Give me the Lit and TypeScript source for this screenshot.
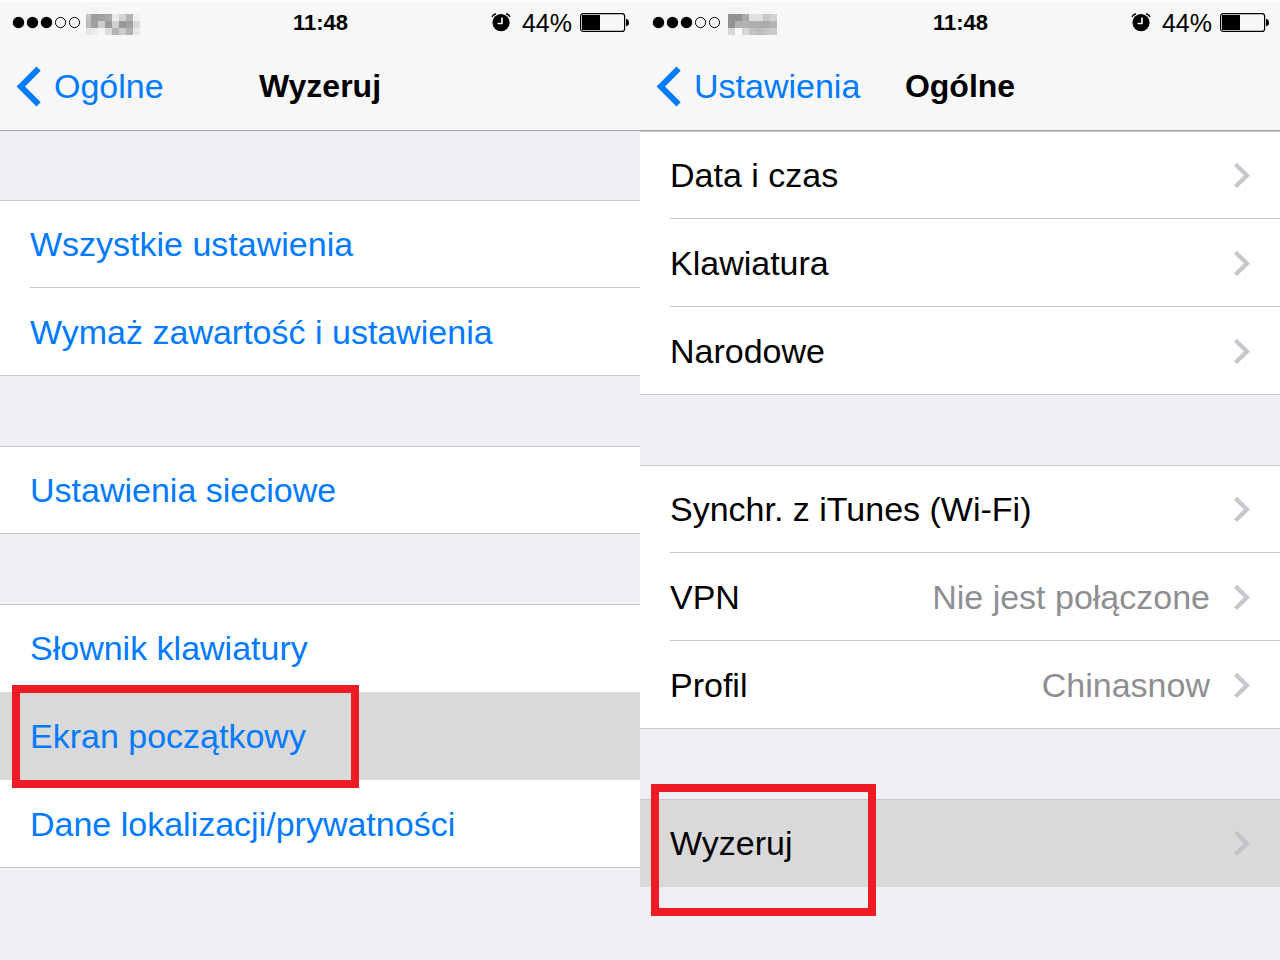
import { LitElement, html, svg, css, nothing } from "lit";
import { customElement, property } from "lit/decorators.js";
import { classMap } from "lit/directives/class-map.js";

interface Row {
  label: string;
  value?: string;
  active?: boolean;
  mark?: "tight" | "tall";
}

// Mosaic over the carrier name: start of the first column, start of the second, rows of shades.
interface Mosaic {
  first: number;
  second: number;
  shades: string[][];
}

const RESET_GROUPS: Row[][] = [
  [{ label: "Wszystkie ustawienia" }, { label: "Wymaż zawartość i ustawienia" }],
  [{ label: "Ustawienia sieciowe" }],
  [
    { label: "Słownik klawiatury" },
    { label: "Ekran początkowy", active: true, mark: "tight" },
    { label: "Dane lokalizacji/prywatności" },
  ],
];

const GENERAL_GROUPS: Row[][] = [
  [{ label: "Data i czas" }, { label: "Klawiatura" }, { label: "Narodowe" }],
  [
    { label: "Synchr. z iTunes (Wi-Fi)" },
    { label: "VPN", value: "Nie jest połączone" },
    { label: "Profil", value: "Chinasnow" },
  ],
  [{ label: "Wyzeruj", active: true, mark: "tall" }],
];

const CARRIER_A: Mosaic = {
  first: 0,
  second: 5,
  shades: [
    ["#f5f5f5", "#f2f2f2", "#f6f6f6", "#f4f4f4", "#f7f7f7", "#f7f7f7", "#f7f7f7", "#f7f7f7"],
    ["#c2c2c2", "#9e9e9e", "#a0a0a0", "#a9a9a9", "#ebebeb", "#d4d4d4", "#b4b4b4", "#f0f0f0"],
    ["#bcbcbc", "#a0a0a0", "#cecece", "#9a9a9a", "#d0d0d0", "#999999", "#a2a2a2", "#dadada"],
    ["#e4e4e4", "#ececec", "#f5f5f5", "#dddddd", "#b4b4b4", "#cccccc", "#b2b2b2", "#e8e8e8"],
  ],
};

const CARRIER_B: Mosaic = {
  first: 2,
  second: 9,
  shades: [
    ["#f2f2f2", "#f4f4f4", "#f4f4f4", "#f7f7f7", "#f7f7f7", "#f7f7f7", "#f7f7f7"],
    ["#929292", "#929292", "#aaaaaa", "#e0e0e0", "#e0e0e0", "#c8c8c8", "#d4d4d4"],
    ["#929292", "#b2b2b2", "#b2b2b2", "#b0b0b0", "#aeaeae", "#acacac", "#b4b4b4"],
    ["#d6d6d6", "#fafafa", "#d8d8d8", "#c4c4c4", "#bcbcbc", "#c4c4c4", "#cacaca"],
  ],
};

@customElement("status-bar")
export class StatusBar extends LitElement {
  @property({ attribute: false }) carrier: Mosaic = CARRIER_A;

  static styles = css`
    :host {
      display: grid;
      grid-template-columns: 1fr auto 1fr;
      align-items: center;
      height: 42px;
      padding: 0 11px 0 12px;
    }
    .signal, .power { display: flex; align-items: center; }
    .signal { gap: 5px; }
    .power { justify-content: flex-end; }
    .time { font-size: 22px; font-weight: 700; }
    .percent { font-size: 25px; margin: 0 8px 0 11px; }
    svg { display: block; }
  `;

  private renderMosaic({ first, second, shades }: Mosaic) {
    return shades.map((row, r) =>
      row.map((shade, c) => {
        const x = c === 0 ? first : second + (c - 1) * 7;
        const width = c === 0 ? second - first : 7;
        return svg`<rect x=${x} y=${r * 7} width=${width} height="7" fill=${shade} />`;
      })
    );
  }

  render() {
    return html`
      <div class="signal">
        <svg width="69" height="14" viewBox="0 0 69 14" aria-hidden="true">
          ${[0, 1, 2, 3, 4].map((i) =>
            i < 3
              ? svg`<circle cx=${6.5 + i * 14} cy="6.5" r="5.7" />`
              : svg`<circle cx=${6.5 + i * 14} cy="6.5" r="5.1" fill="none" stroke="#000" />`
          )}
        </svg>
        <svg width="54" height="32" viewBox="0 0 54 32" shape-rendering="crispEdges" aria-hidden="true">
          ${this.renderMosaic(this.carrier)}
        </svg>
      </div>
      <span class="time">11:48</span>
      <div class="power">
        <svg width="20" height="20" viewBox="0 0 20 20" aria-hidden="true">
          <circle cx="10" cy="9.6" r="8.6" />
          <path d="M.9 3.800Q2.300 1.200 5 .7M19.100 3.800Q17.700 1.200 15 .7" fill="none" stroke="#000" stroke-width="1.400" />
          <path d="M11 4.500v6H6.500" fill="none" stroke="#f7f7f7" stroke-width="1.700" />
        </svg>
        <span class="percent">44%</span>
        <svg width="49" height="20" viewBox="0 0 49 20" aria-hidden="true">
          <rect x=".6" y=".6" width="44" height="17.800" rx="2.500" fill="none" stroke="#000" stroke-width="1.200" />
          <path d="M2 2h18v15H2zM46 6q3 0 3 3.500t-3 3.500z" />
        </svg>
      </div>
    `;
  }
}

@customElement("settings-screen")
export class SettingsScreen extends LitElement {
  @property() heading = "";
  @property() back = "";
  @property({ attribute: false }) groups: Row[][] = [];
  @property({ attribute: false }) carrier: Mosaic = CARRIER_A;
  @property({ type: Boolean }) links = false;

  static styles = css`
    :host { display: block; background: #efeff4; color: #000; }
    .header {
      background: #f7f7f7;
      border-top: 2px solid #fff;
      border-bottom: 1px solid #a7a7aa;
    }
    .nav {
      display: grid;
      grid-template-columns: 1fr auto 1fr;
      align-items: center;
      height: 86px;
      padding: 0 16px 2px;
      box-sizing: border-box;
    }
    .back {
      display: flex;
      align-items: center;
      gap: 12px;
      color: #007aff;
      font-size: 34px;
      line-height: 40px;
      text-decoration: none;
    }
    .title { margin: 0; font-size: 32px; line-height: 40px; font-weight: 700; }
    .groups { display: flex; flex-direction: column; gap: 70px; }
    .spaced { padding-top: 69px; }
    .group {
      margin: 0;
      padding: 0;
      list-style: none;
      background: linear-gradient(#c8c7cc, #c8c7cc) 0 0 / 100% 1px no-repeat #fff;
    }
    .item { position: relative; height: 88px; }
    .row {
      display: flex;
      align-items: center;
      width: 100%;
      height: 100%;
      padding: 0 30px;
      border: 0;
      background: linear-gradient(#c8c7cc, #c8c7cc) 30px 100% / 100% 1px no-repeat;
      color: inherit;
      font: inherit;
      font-size: 34px;
      line-height: 40px;
      text-align: left;
    }
    .item:last-child .row { background-position: 0 100%; }
    .link { color: #007aff; }
    .item .row.active { background: #d9d9d9; }
    .item:first-child .row.active { box-shadow: inset 0 1px #c8c7cc; }
    .item.before .row { background-image: none; }
    .label { flex: 1; }
    .value { color: #8e8e93; margin-right: 24px; }
    .chevron { display: block; }
    .mark { position: absolute; border: 8px solid #ed1c24; box-sizing: border-box; pointer-events: none; }
    .tight { inset: -7px auto -8px 12px; width: 347px; }
    .tall { inset: -15px auto -29px 11px; width: 225px; }
  `;

  private renderRow(row: Row, next?: Row) {
    return html`
      <li class=${classMap({ item: true, before: !!next?.active })}>
        <button class=${classMap({ row: true, link: this.links, active: !!row.active })}>
          <span class="label">${row.label}</span>
          ${row.value ? html`<span class="value">${row.value}</span>` : nothing}
          ${this.links
            ? nothing
            : html`<svg class="chevron" width="16" height="26" viewBox="0 0 16 26" aria-hidden="true">
                <path d="M3 .7L16 13.400 3 26 0 23.100 9.800 13.400 0 3.700z" fill=${row.active ? "#c4c4c8" : "#c7c7cc"} />
              </svg>`}
        </button>
        ${row.mark ? html`<div class="mark ${row.mark}"></div>` : nothing}
      </li>
    `;
  }

  render() {
    return html`
      <header class="header">
        <status-bar .carrier=${this.carrier}></status-bar>
        <nav class="nav">
          <a class="back" href="#">
            <svg width="26" height="42" viewBox="0 0 26 42" aria-hidden="true">
              <path d="M.6 21.500L20.500 1.500 24.700 5.700 9 21.500 24.700 37.300 20.500 41.500z" fill="currentColor" />
            </svg>
            ${this.back}
          </a>
          <h1 class="title">${this.heading}</h1>
        </nav>
      </header>
      <main class=${classMap({ groups: true, spaced: this.links })}>
        ${this.groups.map(
          (g) => html`<ul class="group">${g.map((r, i) => this.renderRow(r, g[i + 1]))}</ul>`
        )}
      </main>
    `;
  }
}

@customElement("app-root")
export class AppRoot extends LitElement {
  static styles = css`
    :host {
      display: grid;
      grid-template-columns: 1fr 1fr;
      min-height: 100vh;
      font-family: "Liberation Sans", Arial, sans-serif;
    }
  `;

  render() {
    return html`
      <settings-screen heading="Wyzeruj" back="Ogólne" links .groups=${RESET_GROUPS} .carrier=${CARRIER_A}></settings-screen>
      <settings-screen heading="Ogólne" back="Ustawienia" .groups=${GENERAL_GROUPS} .carrier=${CARRIER_B}></settings-screen>
    `;
  }
}
